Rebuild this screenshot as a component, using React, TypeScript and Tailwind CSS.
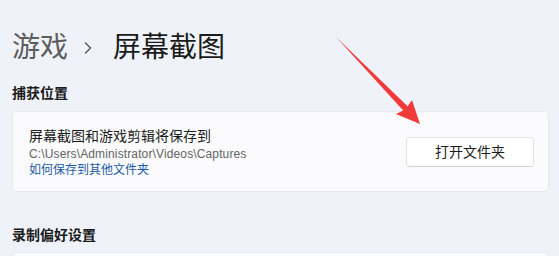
import { ChevronRight } from 'lucide-react';

const FONT = { fontFamily: '"Segoe UI", "Liberation Sans", "Noto Sans CJK SC", sans-serif' };

function RedArrow() {
  // 标注箭头：从标题右侧指向“打开文件夹”按钮
  return (
    <svg className="absolute left-0 top-0 pointer-events-none" width="559" height="256" viewBox="0 0 559 256">
      <polygon
        points="336,37 407.6,106.3 412,100 420,124 396,114 403.2,110.5"
        fill="#f03b3b"
      />
    </svg>
  );
}

export default function App() {
  return (
    <div className="relative w-[559px] h-[256px] overflow-hidden bg-[#eff3f9] text-[#1b1b1b]" style={FONT}>
      <div className="pl-3 pr-[10px]">
        {/* 面包屑标题 */}
        <h1 className="mt-[34px] flex items-center text-[28px] leading-[28px] font-normal">
          <span className="text-[#5d5d5d]">游戏</span>
          <ChevronRight className="ml-[10px] mr-[15px] w-[20px] h-[20px] text-[#5d5d5d]" strokeWidth={1.8} />
          <span>屏幕截图</span>
        </h1>

        <div className="mt-[24px] text-[14px] leading-[14px] font-semibold">捕获位置</div>

        <div className="mt-[11px] h-[81px] rounded-[4px] border border-[#e6e8ec] bg-[#fbfbfd] flex items-center justify-between pl-[16px] pr-[14px]">
          <div className="flex flex-col">
            <div className="text-[14px] leading-[20px]">屏幕截图和游戏剪辑将保存到</div>
            <div className="text-[12px] leading-[16px] tracking-[0.13px] text-[#646464]">C:\Users\Administrator\Videos\Captures</div>
            <div className="text-[12px] leading-[16px] text-[#1a5aa6]">如何保存到其他文件夹</div>
          </div>
          <button className="w-[128px] h-[30px] rounded-[4px] border border-[#e3e3e3] border-b-[#d2d2d2] bg-white text-[14px] leading-[14px] text-[#1b1b1b]">
            打开文件夹
          </button>
        </div>

        <div className="mt-[36px] text-[14px] leading-[14px] font-semibold">录制偏好设置</div>

        <div className="mt-[10px] h-[60px] rounded-[4px] border border-[#e6e8ec] bg-[#fbfbfd]" />
      </div>
      <RedArrow />
    </div>
  );
}
